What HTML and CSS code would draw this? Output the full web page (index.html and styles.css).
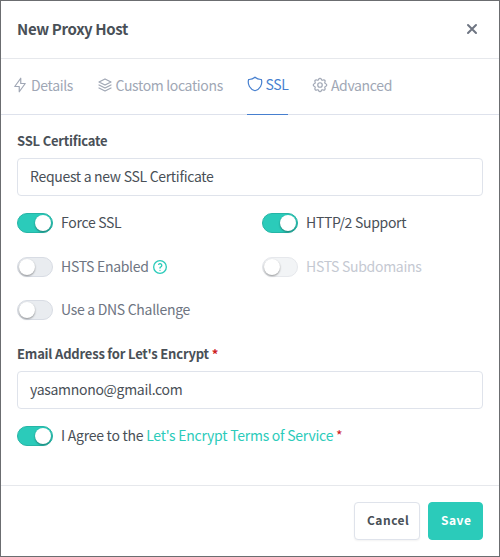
FILE: index.html
```html
<!DOCTYPE html>
<html lang="en">
<head>
  <meta charset="UTF-8">
  <meta name="viewport" content="width=device-width, initial-scale=1.0">
  <title>New Proxy Host</title>
  <link rel="stylesheet" href="styles.css">
</head>
<body>
  <div class="modal">
    <div class="modal-header">
      <h5 class="modal-title">New Proxy Host</h5>
      <svg class="close-icon" viewBox="0 0 12 12" width="12" height="12">
        <path d="M2 2l8 8M10 2l-8 8"/>
      </svg>
    </div>

    <ul class="tabs">
      <li class="tab">
        <svg class="tab-icon" viewBox="0 0 24 24"><path d="M13 3v7h6l-8 11v-7H5l8-11"/></svg>
        Details
      </li>
      <li class="tab">
        <svg class="tab-icon" viewBox="0 0 24 24"><path d="M12 4L4 8l8 4 8-4-8-4"/><path d="M4 12l8 4 8-4"/><path d="M4 16l8 4 8-4"/></svg>
        Custom locations
      </li>
      <li class="tab active">
        <svg class="tab-icon" viewBox="0 0 24 24"><path d="M12 3a12 12 0 0 0 8.5 3A12 12 0 0 1 12 21 12 12 0 0 1 3.5 6 12 12 0 0 0 12 3"/></svg>
        SSL
      </li>
      <li class="tab">
        <svg class="tab-icon" viewBox="0 0 24 24"><path d="M10.325 4.317c.426-1.756 2.924-1.756 3.35 0a1.724 1.724 0 0 0 2.573 1.066c1.543-.94 3.31.826 2.37 2.37a1.724 1.724 0 0 0 1.065 2.572c1.756.426 1.756 2.924 0 3.35a1.724 1.724 0 0 0-1.066 2.573c.94 1.543-.826 3.31-2.37 2.37a1.724 1.724 0 0 0-2.572 1.065c-.426 1.756-2.924 1.756-3.35 0a1.724 1.724 0 0 0-2.573-1.066c-1.543.94-3.31-.826-2.37-2.37a1.724 1.724 0 0 0-1.065-2.572c-1.756-.426-1.756-2.924 0-3.35a1.724 1.724 0 0 0 1.066-2.573c-.94-1.543.826-3.31 2.37-2.37.996.608 2.296.07 2.572-1.065z"/><circle cx="12" cy="12" r="3"/></svg>
        Advanced
      </li>
    </ul>

    <div class="modal-body">
      <label class="form-label">SSL Certificate</label>
      <div class="form-control">Request a new SSL Certificate</div>

      <div class="switch-grid">
        <div class="switch-row">
          <span class="switch on"></span>
          <span class="switch-label">Force SSL</span>
        </div>
        <div class="switch-row">
          <span class="switch on"></span>
          <span class="switch-label">HTTP/2 Support</span>
        </div>
        <div class="switch-row">
          <span class="switch"></span>
          <span class="switch-label">HSTS Enabled</span>
          <svg class="help-icon" viewBox="0 0 24 24"><circle cx="12" cy="12" r="9.5"/><path d="M12 17v.01"/><path d="M12 13.5a1.5 1.5 0 0 1 1-1.5 2.6 2.6 0 1 0-3-4"/></svg>
        </div>
        <div class="switch-row disabled">
          <span class="switch"></span>
          <span class="switch-label">HSTS Subdomains</span>
        </div>
        <div class="switch-row">
          <span class="switch"></span>
          <span class="switch-label">Use a DNS Challenge</span>
        </div>
      </div>

      <label class="form-label email-label">Email Address for Let's Encrypt <span class="required">*</span></label>
      <div class="form-control">yasamnono@gmail.com</div>

      <div class="switch-row agree-row">
        <span class="switch on"></span>
        <span class="switch-label">I Agree to the <a class="link">Let's Encrypt Terms of Service</a> <span class="required">*</span></span>
      </div>
    </div>

    <div class="modal-footer">
      <button class="btn btn-cancel">Cancel</button>
      <button class="btn btn-save">Save</button>
    </div>
  </div>
</body>
</html>
```

FILE: styles.css
```css
* {
  box-sizing: border-box;
}

body {
  margin: 0;
  height: 557px;
  padding: 1px;
  background-color: #6b6d70;
  font-family: "Noto Sans CJK SC", "Source Sans Pro", "Noto Sans", sans-serif;
  font-size: 14px;
  letter-spacing: -0.3px;
  line-height: 24px;
  color: #495057;
  overflow: hidden;
}

.modal {
  height: 555px;
  background: #fff;
  display: flex;
  flex-direction: column;
}

.modal-header {
  height: 58px;
  flex: none;
  padding: 0 21px 1px 16px;
  display: flex;
  align-items: center;
  justify-content: space-between;
  border-bottom: 1px solid #e6e8ec;
}

.modal-title {
  margin: 0;
  font-size: 15px;
  font-weight: 700;
  letter-spacing: -0.35px;
  color: #495057;
}

.close-icon {
  fill: none;
  stroke: #6e7582;
  stroke-width: 2;
  stroke-linecap: round;
}

.tabs {
  height: 56px;
  flex: none;
  margin: 0;
  padding: 0 0 0 12px;
  list-style: none;
  display: flex;
  gap: 24.5px;
  letter-spacing: -0.35px;
  border-bottom: 1px solid #dee2ec;
}

.tab {
  height: 56px;
  padding-bottom: 5px;
  display: flex;
  align-items: center;
  gap: 2px;
  color: #a0a7b5;
}

.tab.active {
  color: #467fcf;
  border-bottom: 1px solid #467fcf;
}

.tab-icon {
  width: 18px;
  height: 18px;
  margin-left: -2px;
  fill: none;
  stroke: currentColor;
  stroke-width: 1.6;
  stroke-linecap: round;
  stroke-linejoin: round;
}

.tab.active .tab-icon {
  margin-left: -1px;
  margin-right: -1px;
}

.modal-body {
  flex: 1;
  padding: 14px 16px 0;
}

.form-label {
  display: block;
  font-size: 13px;
  font-weight: 700;
  letter-spacing: -0.2px;
  line-height: 24px;
  color: #495057;
}

.form-control {
  height: 38px;
  margin-top: 5px;
  padding: 5px 12px;
  border: 1px solid #dfe3eb;
  border-radius: 4px;
  color: #495057;
}

.switch-grid {
  margin-top: 15px;
  display: grid;
  grid-template-columns: 245px 1fr;
  row-gap: 19.5px;
}

.switch-row {
  height: 24px;
  display: flex;
  align-items: center;
  gap: 8px;
  color: #6e7582;
}

.switch-label {
  padding-bottom: 2px;
}

.switch {
  position: relative;
  width: 36px;
  height: 20px;
  flex: none;
  border-radius: 10px;
  background: #e9ecf0;
  border: 1px solid #d8dce4;
}

.switch::after {
  content: "";
  position: absolute;
  top: 1px;
  left: 1px;
  width: 16px;
  height: 16px;
  border-radius: 50%;
  background: #fff;
  box-shadow: 0 1px 2px rgba(0, 0, 0, 0.4);
}

.switch.on {
  background: #2bcbba;
  border-color: #26b5a6;
}

.switch.on::after {
  left: auto;
  right: 1px;
}

.switch-row .switch.on + .switch-label {
  color: #495057;
}

.switch-row.disabled {
  color: #c5c9d2;
}

.switch-row.disabled .switch {
  background: #f2f4f6;
  border-color: #e6e8ec;
}

.help-icon {
  width: 16px;
  height: 16px;
  margin-left: -5px;
  fill: none;
  stroke: #2bcbba;
  stroke-width: 2;
  stroke-linecap: round;
}

.email-label {
  margin-top: 20px;
}

.agree-row {
  margin-top: 15px;
  letter-spacing: -0.25px;
}

.link {
  color: #2bcbba;
}

.required {
  color: #cd201f;
}

.modal-footer {
  height: 71px;
  flex: none;
  padding: 16px 16px 0 0;
  display: flex;
  justify-content: flex-end;
  gap: 8px;
  border-top: 1px solid #e6e8ec;
}

.btn {
  height: 38px;
  padding: 0 12px 4px;
  border-radius: 4px;
  font-family: inherit;
  font-size: 12px;
  font-weight: 700;
  letter-spacing: 0.5px;
}

.btn-cancel {
  width: 66px;
  background: #fff;
  border: 1px solid #dfe3eb;
  color: #495057;
  box-shadow: 0 1px 2px rgba(0, 0, 0, 0.05);
}

.btn-save {
  width: 55px;
  background: #2bcbba;
  border: 1px solid #2bcbba;
  color: #fff;
}
```
